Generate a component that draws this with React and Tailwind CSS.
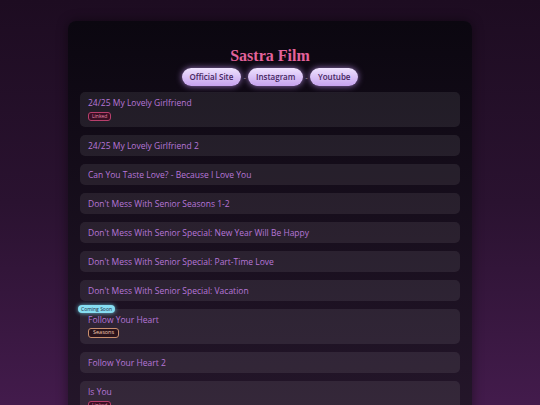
import React from "react";

const items = [
  { t: "24/25 My Lovely Girlfriend", badge: "linked" },
  { t: "24/25 My Lovely Girlfriend 2" },
  { t: "Can You Taste Love? - Because I Love You" },
  { t: "Don't Mess With Senior Seasons 1-2" },
  { t: "Don't Mess With Senior Special: New Year Will Be Happy" },
  { t: "Don't Mess With Senior Special: Part-Time Love" },
  { t: "Don't Mess With Senior Special: Vacation" },
  { t: "Follow Your Heart", badge: "seasons", soon: true },
  { t: "Follow Your Heart 2" },
  { t: "Is You", badge: "linked" },
];

function Badge({ kind }) {
  if (kind === "linked")
    return (
      <span className="inline-flex items-center h-[9px] px-[3px] rounded-[3px] border border-[#b83f6c] bg-[#3a0f24] text-[#e889ad] text-[5px] leading-none">
        Linked
      </span>
    );
  return (
    <span className="inline-flex items-center h-[10px] px-[4px] rounded-[3px] border border-[#c98f6e] bg-[#2a131c] text-[#f2c7ae] text-[5.5px] leading-none">
      Seasons
    </span>
  );
}

export default function App() {
  return (
    <div
      className="h-screen overflow-hidden bg-gradient-to-b from-[#1d0c21] via-[#2a1230] to-[#431b4c] pt-[21px]"
      style={{ fontFamily: '"Open Sans", "Noto Sans", sans-serif' }}
    >
      <div className="mx-auto w-[404px] h-[420px] rounded-[8px] bg-gradient-to-b from-[#0b0710] to-[#26172c] shadow-[0_0_12px_rgba(0,0,0,0.45)] px-[12px] pt-[25px]">
        <h1
          className="text-center text-[16px] leading-[20px] font-bold text-[#e3639b]"
          style={{ fontFamily: '"Liberation Serif", "DejaVu Serif", serif' }}
        >
          Sastra Film
        </h1>
        <div className="mt-[2px] flex justify-center items-center gap-[2px]">
          {["Official Site", "Instagram", "Youtube"].map((l, i) => (
            <React.Fragment key={l}>
              {i > 0 && (
                <span className="relative z-10 text-[#a595ab] text-[8px] leading-none">-</span>
              )}
              <span className="h-[18px] px-[8px] flex items-center rounded-full bg-gradient-to-b from-[#eee2fd] to-[#c6a2ee] text-[#45265f] text-[8px] font-semibold shadow-[0_0_6px_rgba(196,150,245,0.75)]">
                {l}
              </span>
            </React.Fragment>
          ))}
        </div>
        <div className="mt-[6px] flex flex-col gap-[8px]">
          {items.map((it) => (
            <div
              key={it.t}
              className="relative rounded-[5px] bg-white/[0.08] px-[8px] pt-[5px] pb-[5px]"
            >
              {it.soon && (
                <span className="absolute left-[-2px] top-[-4px] h-[8px] px-[3px] flex items-center rounded-[4px] bg-[#86def2] text-[#1c2a40] text-[5px] leading-none shadow-[0_0_4px_rgba(120,220,245,0.8)]">
                  Coming Soon
                </span>
              )}
              <div className="text-[8.5px] leading-[11px] font-medium text-[#b676d8]">{it.t}</div>
              {it.badge && (
                <div className="mt-[3px] mb-[1px] h-[10px] flex items-center">
                  <Badge kind={it.badge} />
                </div>
              )}
            </div>
          ))}
        </div>
      </div>
    </div>
  );
}
